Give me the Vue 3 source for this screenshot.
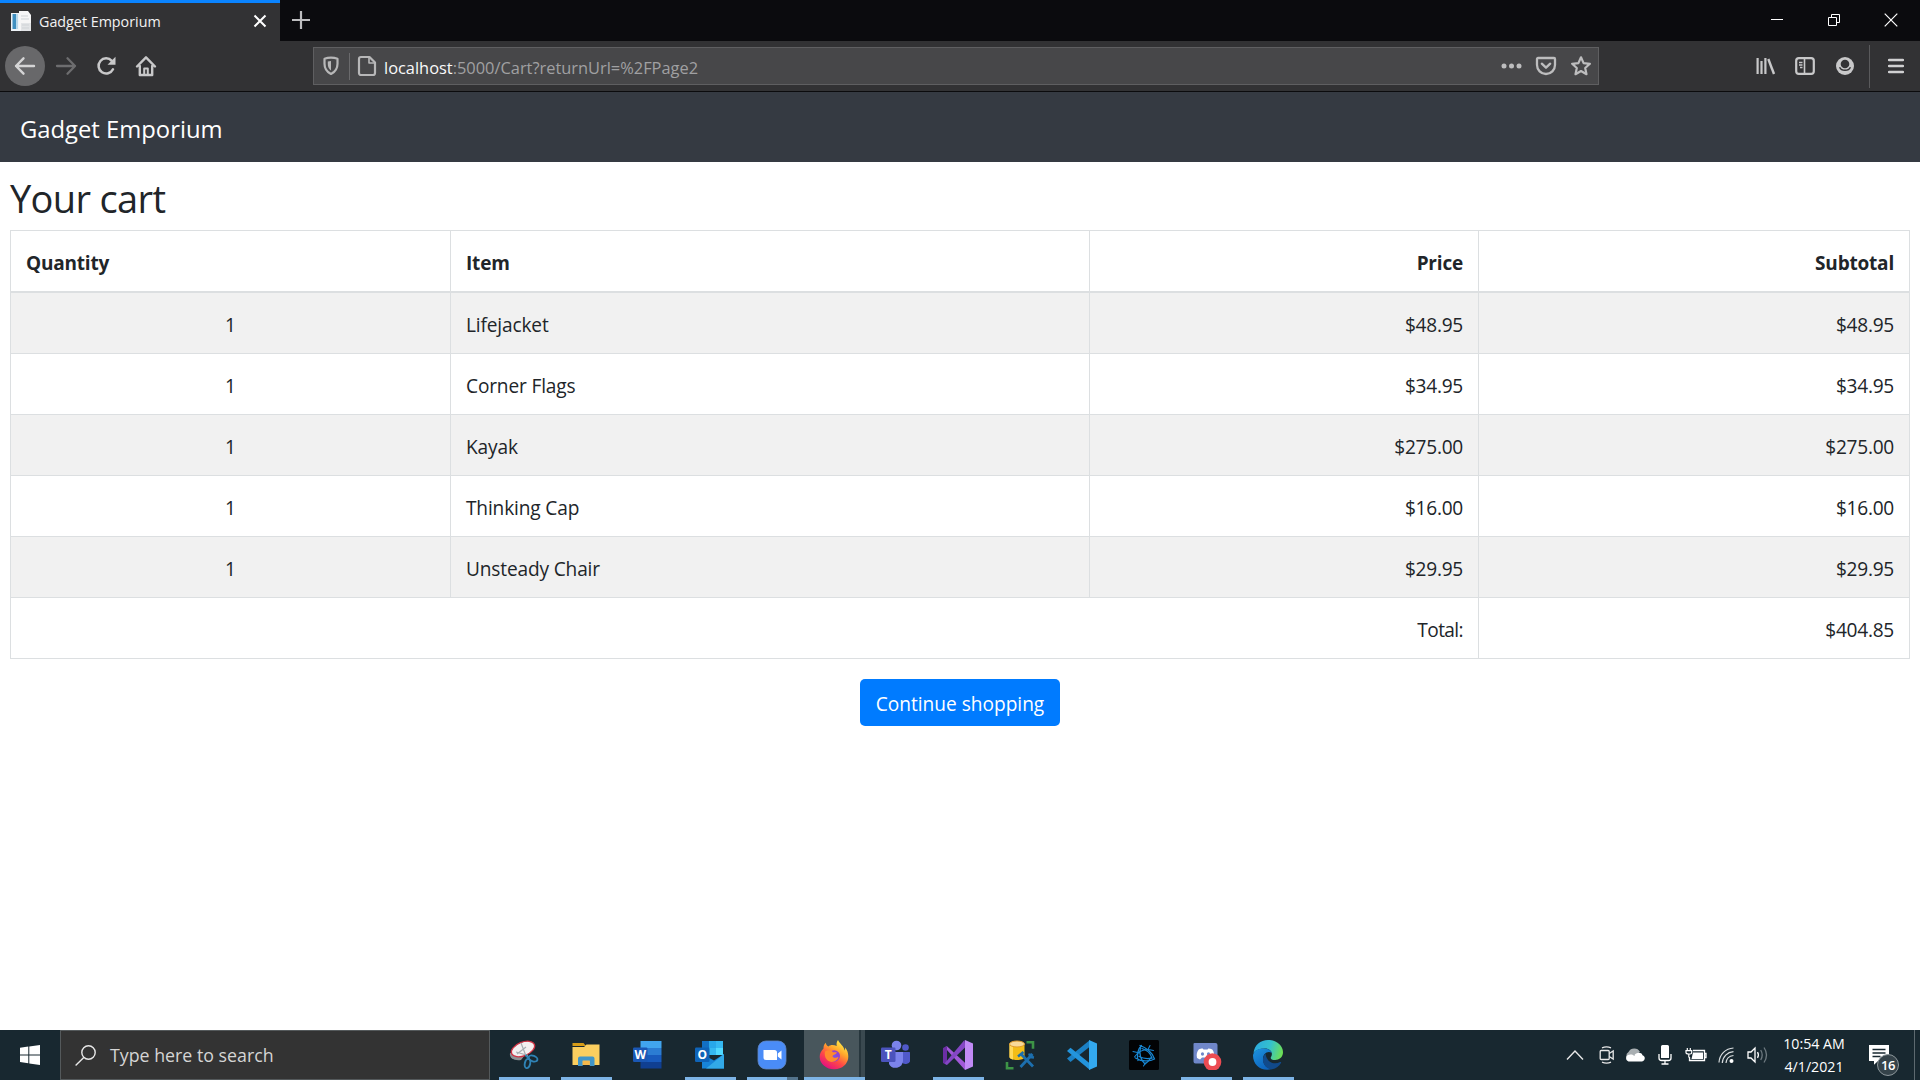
<script setup>
const rows = [
  { quantity: 1, item: 'Lifejacket', price: '$48.95', subtotal: '$48.95' },
  { quantity: 1, item: 'Corner Flags', price: '$34.95', subtotal: '$34.95' },
  { quantity: 1, item: 'Kayak', price: '$275.00', subtotal: '$275.00' },
  { quantity: 1, item: 'Thinking Cap', price: '$16.00', subtotal: '$16.00' },
  { quantity: 1, item: 'Unsteady Chair', price: '$29.95', subtotal: '$29.95' },
]
</script>

<template>
  <div class="screen">
    <header class="tabstrip">
      <div class="tab">
        <svg class="favicon" width="21" height="21" viewBox="0 0 21 21">
          <path d="M0 2h9l2 2v16H0z" fill="#eef3f7" />
          <path d="M1.500 3h3.500v15H1.500z" fill="#3f8fc0" />
          <path d="M5 3h2v15H5z" fill="#b9d8ea" />
          <path d="M8 0h9l3 4v15H8z" fill="#f6f6f6" />
          <path d="M10 12h10v8H10z" fill="#e2e4e6" />
          <path d="M10 5h7M10 8h8M11 14h7M11 17h7" stroke="#cfd3d6" />
        </svg>
        <span class="tab-title">Gadget Emporium</span>
        <svg class="tab-close" width="14" height="14" viewBox="0 0 14 14"><path d="M1.500 1.500l11 11M12.500 1.500l-11 11" stroke="#fff" stroke-width="2" /></svg>
      </div>
      <svg class="newtab" width="18" height="18" viewBox="0 0 18 18"><path d="M9 0v18M0 9h18" stroke="#bdbdbf" stroke-width="2.200" /></svg>
      <div class="winctl">
        <svg width="14" height="14" viewBox="0 0 14 14"><path d="M1 6.500h12" stroke="#fff" /></svg>
        <svg width="14" height="14" viewBox="0 0 14 14" fill="none" stroke="#fff"><path d="M1.500 4.500h8v8h-8zM4.500 4.500v-3h8v8h-3" /></svg>
        <svg width="14" height="14" viewBox="0 0 14 14"><path d="M.7.700l12.600 12.600M13.300.700L.7 13.300" stroke="#fff" stroke-width="1.200" /></svg>
      </div>
    </header>

    <div class="toolbar">
      <div class="nav">
        <span class="back">
          <svg width="22" height="20" viewBox="0 0 22 20" fill="none" stroke="#d4d4d5" stroke-width="2.400" stroke-linecap="round" stroke-linejoin="round"><path d="M20 10H2M9.500 2.300L2 10l7.500 7.700" /></svg>
        </span>
        <svg class="fwd" width="22" height="20" viewBox="0 0 22 20" fill="none" stroke="#6d6d6f" stroke-width="2.300" stroke-linecap="round" stroke-linejoin="round"><path d="M2 10h18M12.500 2.300L20 10l-7.500 7.700" /></svg>
        <svg class="reload" width="20" height="20" viewBox="0 0 20 20">
          <path d="M15.800 4.800A7.600 7.600 0 1 0 17 13.300" fill="none" stroke="#c8c8c9" stroke-width="2.500" stroke-linecap="round" />
          <path d="M19.500.800v8h-8z" fill="#c8c8c9" />
        </svg>
        <svg class="home" width="22" height="22" viewBox="0 0 22 22" fill="none" stroke="#c8c8c9" stroke-width="2.400" stroke-linecap="round" stroke-linejoin="round">
          <path d="M2 11.500L11 2.300l9 9.200M4.800 11v9h12.400v-9" />
          <path d="M9.200 19v-5.500h3.600V19" stroke-width="2" />
        </svg>
      </div>
      <div class="urlbar">
        <svg class="shield" width="18" height="20" viewBox="0 0 18 20">
          <path d="M9 1.700c2.500 0 4.700.4 6.500 1v5c0 4.500-2 8-6.500 10.300C4.500 15.700 2.500 12.200 2.500 7.700v-5C4.300 2.100 6.500 1.700 9 1.700z" fill="none" stroke="#b7b7b8" stroke-width="2.200" stroke-linejoin="round" />
          <path d="M9 5v9.500C6.900 13 5.800 10.700 5.800 8V5.400z" fill="#b7b7b8" />
        </svg>
        <i class="usep"></i>
        <svg class="doc" width="20" height="22" viewBox="0 0 20 22" fill="none" stroke="#b7b7b8" stroke-width="2.200" stroke-linejoin="round">
          <path d="M4 2h8.500L18 7.500V18a2 2 0 0 1-2 2H4a2 2 0 0 1-2-2V4a2 2 0 0 1 2-2z" /><path d="M12 2.500V8h5.500" stroke-width="1.600" />
        </svg>
        <span class="url"><b>localhost</b>:5000/Cart?returnUrl=%2FPage2</span>
        <svg class="dots" width="22" height="6" viewBox="0 0 22 6" fill="#bdbdbe"><circle cx="3" cy="3" r="2.500" /><circle cx="10.500" cy="3" r="2.500" /><circle cx="18" cy="3" r="2.500" /></svg>
        <svg class="pocket" width="22" height="20" viewBox="0 0 22 20" fill="none" stroke="#bdbdbe" stroke-width="2.300" stroke-linecap="round" stroke-linejoin="round">
          <path d="M3 2h16a1 1 0 0 1 1 1v6a9 9 0 0 1-18 0V3a1 1 0 0 1 1-1z" /><path d="M6.800 7.700L11 11.700l4.200-4" />
        </svg>
        <svg class="star" width="22" height="22" viewBox="0 0 22 22"><path d="M11 2.300l2.600 5.800 6.300.700-4.700 4.200 1.300 6.200L11 16l-5.500 3.200L6.800 13 2.100 8.800l6.300-.7z" fill="none" stroke="#bdbdbe" stroke-width="2.200" stroke-linejoin="round" /></svg>
      </div>
      <div class="actions">
        <svg class="lib" width="20" height="18" viewBox="0 0 20 18" fill="none" stroke="#c8c8c9" stroke-width="2.200"><path d="M1.600 1v16M5.500 4v13M9.400 1v16" /><path d="M12.300 2l5.700 15" stroke-width="2.400" /></svg>
        <svg class="side" width="20" height="18" viewBox="0 0 20 18" fill="none" stroke="#c8c8c9"><rect x="1.200" y="1.200" width="17.600" height="15.600" rx="2.600" stroke-width="2.200" /><path d="M9.500 2v14" stroke-width="1.600" /><path d="M4 5.500h3.500M4 8h3.500M5 10.500h2.500" stroke-width="1.300" /></svg>
        <svg class="acct" width="18" height="18" viewBox="0 0 18 18"><circle cx="9" cy="9" r="9" fill="#c8c8c9" /><circle cx="9" cy="7" r="4.300" fill="#323234" /><path d="M3.600 10.200C5.400 14.300 12.600 14.300 14.400 10.200" fill="none" stroke="#323234" stroke-width="1.500" /></svg>
        <i class="asep"></i>
        <svg class="menu" width="16" height="16" viewBox="0 0 16 16"><path d="M1 2h14M1 8h14M1 14h14" stroke="#d0d0d1" stroke-width="2.300" stroke-linecap="round" /></svg>
      </div>
    </div>

    <nav class="navbar"><a class="brand">Gadget Emporium</a></nav>

    <main class="page">
      <h2>Your cart</h2>
      <table>
        <colgroup><col class="c-qty" /><col class="c-item" /><col class="c-price" /><col class="c-sub" /></colgroup>
        <thead>
          <tr><th>Quantity</th><th>Item</th><th class="right">Price</th><th class="right">Subtotal</th></tr>
        </thead>
        <tbody>
          <tr v-for="row in rows" :key="row.item">
            <td class="center">{{ row.quantity }}</td>
            <td>{{ row.item }}</td>
            <td class="right">{{ row.price }}</td>
            <td class="right">{{ row.subtotal }}</td>
          </tr>
        </tbody>
        <tfoot>
          <tr><td colspan="3" class="right total">Total:</td><td class="right">$404.85</td></tr>
        </tfoot>
      </table>
      <div class="buttons"><a class="btn">Continue shopping</a></div>
    </main>

    <footer class="taskbar">
      <div class="start">
        <svg width="20" height="20" viewBox="0 0 20 20" fill="#fff"><path d="M0 2.800l8.300-1.200v7.800H0zM9.300 1.400L20 0v9.400H9.300zM0 10.500h8.300v7.800L0 17.100zM9.300 10.500H20V20L9.300 18.500z" /></svg>
      </div>
      <div class="search">
        <svg width="21" height="21" viewBox="0 0 21 21" fill="none" stroke="#e8e8e8" stroke-width="1.400"><circle cx="13.500" cy="7.500" r="6.700" /><path d="M8.800 12.400L.6 20.500" /></svg>
        <span>Type here to search</span>
      </div>
      <div class="apps">
        <div class="app open">
          <svg width="30" height="30" viewBox="0 0 30 30">
            <path d="M1 13c-1 5 4 8 11 7l4-5z" fill="#8d9295" />
            <ellipse cx="14" cy="9" rx="12.300" ry="6.800" transform="rotate(-22 14 9)" fill="#f4f0f0" stroke="#cf3344" stroke-width="1.300" />
            <path d="M12 3l5 13M7 12l12 3.500M8 14l9-7" stroke="#a8aeb2" stroke-width="1.200" />
            <g fill="none" stroke="#2f83b5" stroke-width="1.900"><ellipse cx="24" cy="18.500" rx="4.600" ry="2.700" transform="rotate(20 24 18.500)" /><ellipse cx="18.500" cy="23.500" rx="2.700" ry="4.700" transform="rotate(12 18.500 23.500)" /><path d="M16.500 15l4 4" /></g>
          </svg>
        </div>
        <div class="app open">
          <svg width="30" height="30" viewBox="0 0 30 30"><path d="M1.500 3h11l2.500 3h-13.500z" fill="#d69c17" /><path d="M1.500 7h11.500l2.500-2.500h13V25h-27z" fill="#fbcf5f" /><path d="M7 26v-7.500a2 2 0 0 1 2-2h12.500a2 2 0 0 1 2 2V26h-4.800v-5.300h-7V26z" fill="#4196c8" /><path d="M11.700 20.700h7V25h-7z" fill="#f5b94b" /></svg>
        </div>
        <div class="app">
          <svg class="office" width="30" height="30" viewBox="0 0 30 30"><path d="M8.500 1h21v7h-21z" fill="#41a5ee" /><path d="M8.500 8h21v7h-21z" fill="#2b7cd3" /><path d="M8.500 15h21v7h-21z" fill="#185abd" /><path d="M8.500 22h21v6.500h-21z" fill="#103f91" /><rect x="1" y="7.500" width="14.500" height="14.500" rx="1.200" fill="#1a57b4" /><text x="8.200" y="18.800" text-anchor="middle" class="glyph">W</text></svg>
        </div>
        <div class="app open">
          <svg class="office" width="30" height="30" viewBox="0 0 30 30"><path d="M8 1h21v14H8z" fill="#1270c4" /><path d="M15 1h7v7h-7z" fill="#28a8ea" /><path d="M22 1h7v7h-7zM15 8h7v7h-7z" fill="#35b8f1" /><path d="M22 8h7v7h-7z" fill="#50d9ff" /><path d="M8 14l12 6.500L30 14v14.500H8z" fill="#1784d8" /><path d="M30 14v14.500H12z" fill="#32a9e7" /><rect x="1" y="7.500" width="14.500" height="14.500" rx="1.200" fill="#0f64b8" /><text x="8.200" y="18.800" text-anchor="middle" class="glyph">O</text></svg>
        </div>
        <div class="app open stacked">
          <svg width="30" height="30" viewBox="0 0 30 30"><rect x="1" y="1" width="28" height="28" rx="8" fill="#4a8cf7" stroke="#5f86c4" stroke-width=".8" /><path d="M6.500 10h11a2.500 2.500 0 0 1 2.500 2.500V20H9a2.500 2.500 0 0 1-2.500-2.500zM20.800 13.500l3.700-3v9l-3.700-3z" fill="#fff" /></svg>
        </div>
        <div class="app open active">
          <svg width="30" height="30" viewBox="0 0 30 30">
            <defs>
              <linearGradient id="ff" x1=".8" y1=".05" x2=".25" y2=".95"><stop offset="0" stop-color="#fff04a" /><stop offset=".35" stop-color="#ffa52b" /><stop offset=".65" stop-color="#ff4a45" /><stop offset="1" stop-color="#e3117f" /></linearGradient>
              <radialGradient id="ffp"><stop offset="0" stop-color="#7a55e8" /><stop offset="1" stop-color="#9a3bc9" /></radialGradient>
            </defs>
            <path d="M19 0c-1.500 2-1.700 4-1.200 6C14 4.500 11 5 9.500 6.500 7.500 6 7 4 6.800 2.800 4.500 5 4.500 7 4.500 8.500 2 11 .7 13.500.7 17A14.200 12.500 0 0 0 29.300 16.500c0-4-1.300-7-3.300-9 .2 1.500 0 2.300-.3 3C24.500 5.500 21 4 19 0z" fill="url(#ff)" />
            <circle cx="15.200" cy="16" r="5.800" fill="url(#ffp)" />
            <path d="M6 11.500c3-2 6-1.500 8 .7h4c-1 2.500-4 2.300-4.500 4 .8 2 4 2 6 .6-1 5-8 7-11.500 3C5.500 17 5.500 14 6 11.500z" fill="#ff8a2e" />
          </svg>
        </div>
        <div class="app">
          <svg class="office" width="30" height="30" viewBox="0 0 30 30"><circle cx="16.500" cy="5.500" r="4.800" fill="#7b83eb" /><circle cx="25.500" cy="7.500" r="3.300" fill="#5059c9" /><path d="M21 12h8a1.500 1.500 0 0 1 1.500 1.500V19a5 5 0 0 1-9 3z" fill="#5059c9" /><path d="M9 12h14v9a7.500 7.500 0 0 1-14 3z" fill="#7b83eb" /><rect x="1" y="7.500" width="14.500" height="14.500" rx="1.200" fill="#4b53bc" /><text x="8.200" y="18.800" text-anchor="middle" class="glyph">T</text></svg>
        </div>
        <div class="app open">
          <svg width="30" height="30" viewBox="0 0 30 30"><path d="M1.500 7.200L4 6.200l18.500 17-.5 6.800z" fill="#a159d8" /><path d="M0 8l4-2v19l-4-2z" fill="#6b2fa5" /><path d="M4 25l-2.500-1.500L21.500 0l1 7z" fill="#8446c4" /><path d="M22 0l8 3.500v23L22 30z" fill="#c18af5" /></svg>
        </div>
        <div class="app">
          <svg width="30" height="30" viewBox="0 0 30 30"><path d="M4.500 4v13c0 1.800 3.400 3 7.500 3s7.500-1.200 7.500-3V4z" fill="#f3bd18" /><path d="M4.500 4v13c0 1 1.500 2 3.500 2.500V5z" fill="#ffd95c" /><ellipse cx="12" cy="4" rx="7.500" ry="3" fill="#f8d99a" stroke="#e09b2c" /><path d="M21.500 2.200h6.500v6.500M2 22v6.300h6.500" fill="none" stroke="#3d9446" stroke-width="2.600" /><path d="M15.500 13.500l12.500 13M27.500 14L15.500 27" stroke="#1c6fae" stroke-width="2.800" /><path d="M13 16.500l5.500-4.500M24.300 13.500l1 3.500 3.700.500" fill="none" stroke="#1c6fae" stroke-width="2.500" /></svg>
        </div>
        <div class="app">
          <svg width="30" height="30" viewBox="0 0 30 30"><path d="M0 18.500l3.500 3.500L23 6.500V0z" fill="#1b80c4" /><path d="M0 11l3.500-3.300L23 23.500V30z" fill="#2394dc" /><path d="M22 0l8 3.500v23L22 30z" fill="#33a9ef" /></svg>
        </div>
        <div class="app">
          <svg width="30" height="30" viewBox="0 0 30 30"><rect width="30" height="30" rx="1.500" fill="#020305" /><g fill="none" stroke="#1886d2" stroke-width="1.300" stroke-linecap="round"><path d="M11 5.500c6 2 12.500 7 14.500 13.500-5 3-14 2.500-19-1M9 20.500c-1.500-5 0-12 3.500-15" /><path d="M13 8.500c5 1.500 8.500 5 10 9.500-4 1-9 .5-13-1.500M11.500 7.500c-1.500 6 0 12 4.500 16.500 3-2 5-4 6.500-7" /><path d="M5.500 17c3-5 8-7.500 14-7.500M4 11.500l6.500 1.500M24.500 10.500l-5-1M14.500 26l2-3M21 5.500l-2 4" stroke-width="1.100" /></g></svg>
        </div>
        <div class="app open">
          <svg class="chat" width="30" height="30" viewBox="0 0 30 30"><path d="M2.500 3h21a2 2 0 0 1 2 2v21l-4-2.500H3.500a2 2 0 0 1-2-2V4a1 1 0 0 1 1-1z" fill="#6f87c9" /><path d="M5 18c-.8-4 0-6 1.700-8.500 1.500-.8 2.500-1 4-1l.8 1h4l.8-1c1.500 0 2.700.3 4 1C22 12 22.500 14 22 18l-3 1.500-2-2h-7l-2 2z" fill="#fff" /><ellipse cx="10.500" cy="14" rx="1.600" ry="1.800" fill="#6f87c9" /><ellipse cx="16.500" cy="14" rx="1.600" ry="1.800" fill="#6f87c9" /><circle cx="20.500" cy="22" r="8.800" fill="#ec4b52" /><circle cx="20.500" cy="22" r="3.900" fill="#fff" /></svg>
        </div>
        <div class="app open">
          <svg width="30" height="30" viewBox="0 0 30 30">
            <defs>
              <linearGradient id="eg1" x1="0" y1=".3" x2="1" y2=".5"><stop offset="0" stop-color="#2aa9e0" /><stop offset=".55" stop-color="#35c1cc" /><stop offset="1" stop-color="#6ddf55" /></linearGradient>
              <linearGradient id="eg2" x1="0" y1="0" x2=".6" y2="1"><stop offset="0" stop-color="#1e95e0" /><stop offset="1" stop-color="#0d63bd" /></linearGradient>
            </defs>
            <path d="M.5 13C1.500 5 7.500 0 15 0c9 0 15 6 15 12.300 0 5-4 7.700-7.800 7.700-3.700 0-5.200-1.500-4.200-3 2.500-4-.5-8.500-6-8.500C6.500 8.500 2.500 10 .5 13z" fill="url(#eg1)" />
            <path d="M0 15.500C.5 11 5 8.500 10.500 8.500c4.500 0 7 1.500 8.300 4.200C14 10.500 10 14 10 19c0 5.500 4 9.500 9 10C9 32 0 25.500 0 15.500z" fill="url(#eg2)" />
            <path d="M12.500 13.500C10 16 9.300 20 10.500 23c1.500 4 5 6.300 8.700 6.200 4-.8 7-3.200 8.800-6.300.5-.8-.2-1.200-.9-.8-6 3-13.500.4-14.600-8.600z" fill="#114a8b" />
          </svg>
        </div>
      </div>
      <div class="tray">
        <svg width="18" height="12" viewBox="0 0 18 12"><path d="M1 10.500l8-8.500 8 8.500" fill="none" stroke="#e8e8e8" stroke-width="1.400" /></svg>
        <svg class="cam" width="16" height="18" viewBox="0 0 16 18" fill="none" stroke="#e8e8e8" stroke-width="1.300"><rect x="1.200" y="4.500" width="9" height="9" rx="1" /><path d="M10.200 7.500l4-2.500v8l-4-2.500M3 1.800q4.500-2 9 0M3 16.200q4.500 2 9 0" /></svg>
        <svg class="cloud" width="22" height="14" viewBox="0 0 22 14"><path d="M5 12A4.500 4.500 0 0 1 4.500 4 6.500 6.500 0 0 1 16 4L8 9z" fill="#a9afb2" /><path d="M4.500 13.500a3.500 3.500 0 0 1 .7-6.800c2.500-.4 3.300 0 5 1C12 4 17.500 4 18.500 7.300c3 .7 3.300 5.500-.5 6.200z" fill="#fff" /></svg>
        <svg class="mic" width="14" height="20" viewBox="0 0 14 20"><path d="M4.500 0h5a1.500 1.500 0 0 1 1.500 1.500V13H3V1.500A1.500 1.500 0 0 1 4.500 0z" fill="#fff" /><path d="M1 9v4q0 2.500 2.500 2.500h7Q13 15.500 13 13V9M7 15.500V19M3.500 19h7" fill="none" stroke="#fff" stroke-width="1.300" /></svg>
        <svg class="bat" width="22" height="16" viewBox="0 0 22 16"><path d="M8 3.500h11.500v10H4.500V10M19.500 6.500h1.500v4h-1.500" fill="none" stroke="#fff" stroke-width="1.300" /><path d="M8 5.500h10v6.500H6.500z" fill="#fff" /><path d="M2.300 1v2.500M5.300 1v2.500M1 3.700h5.700v1.800q0 1.500-1.500 1.500h-1.500Q1 7 1 5.500zM3.800 7v3.500" fill="none" stroke="#fff" stroke-width="1.200" /></svg>
        <svg class="wifi" width="17" height="17" viewBox="0 0 17 17" fill="none"><g stroke="#d9dddf" stroke-width="1.200"><path d="M1 15.500C1.500 7.500 7.500 1.500 15.500 1M4.300 16C4.700 9.500 9.300 5.200 15.500 4.700M8 16C8.300 12 11.300 9 15.500 8.500" /></g><circle cx="13.500" cy="14" r="2" fill="#fff" /></svg>
        <svg class="vol" width="21" height="18" viewBox="0 0 21 18" fill="none" stroke-width="1.300"><path d="M1 6h3l4-4v14l-4-4H1z" stroke="#fff" /><path d="M10.500 6.200q1.800 2.800 0 5.600" stroke="#fff" /><path d="M13.700 4q3 5 0 10M17 1.500q5 7.500 0 15" stroke="#6e7a80" /></svg>
        <div class="clock"><span>10:54 AM</span><span>4/1/2021</span></div>
        <div class="notif">
          <svg width="20" height="20" viewBox="0 0 20 20"><path d="M0 0h20v16H9l-4 3.700V16H0z" fill="#fff" /><path d="M3.500 4.500h13M3.500 8h13M3.500 11.500h8" stroke="#182830" stroke-width="1.400" /></svg>
          <span class="badge">16</span>
        </div>
        <i class="peek"></i>
      </div>
    </footer>
  </div>
</template>

<style>
html, body { margin: 0; overflow: hidden; }
</style>

<style scoped>
* { box-sizing: border-box; }
svg { display: block; flex: none; }
.screen { width: 1920px; height: 1080px; display: flex; flex-direction: column; overflow: hidden; background: #fff; color: #212529; font: 19.1px/30px "Open Sans", "Noto Sans", sans-serif; }

.tabstrip { height: 41px; flex: none; display: flex; align-items: flex-start; background: #0b0b0e; }
.tab { width: 280px; height: 41px; display: flex; align-items: center; padding: 0 13px 0 11px; background: #323234; border-top: 3px solid #0a84ff; }
.favicon { margin-top: -2px; }
.tab-title { flex: 1; margin-left: 7px; color: #f2f2f3; font-size: 14.3px; line-height: 20px; }
.tab-close { margin-top: -2px; }
.newtab { margin: 11px 0 0 12px; }
.winctl { display: flex; gap: 43px; margin: 13px 22px 0 auto; }

.toolbar { height: 51px; flex: none; display: flex; align-items: center; background: #323234; border-bottom: 1px solid #0b0b0d; }
.nav { width: 313px; display: flex; align-items: center; padding-left: 5px; }
.back { width: 40px; height: 40px; display: flex; align-items: center; justify-content: center; border-radius: 50%; background: #68686a; }
.fwd { margin-left: 10px; }
.reload { margin-left: 19px; }
.home { margin-left: 19px; }
.urlbar { width: 1286px; height: 38px; display: flex; align-items: center; padding: 0 6px 0 8px; background: #474749; border: 1px solid #5f5f61; }
.usep { width: 1px; height: 27px; margin-left: 9px; background: #6a6a6c; }
.doc { margin-left: 7px; }
.url { flex: 1; margin: 4px 0 0 7px; color: #a0a0a2; font-size: 16.4px; line-height: 24px; white-space: nowrap; }
.url b { color: #f9f9fa; font-weight: 400; }
.pocket { margin-left: 12px; }
.star { margin-left: 13px; }
.actions { flex: 1; display: flex; align-items: center; padding-left: 157px; }
.side { margin-left: 19px; }
.acct { margin-left: 21px; }
.asep { width: 1px; height: 43px; margin-left: 15px; background: #5a5a5c; }
.menu { margin-left: 18px; }

.navbar { height: 70px; flex: none; display: flex; align-items: center; padding: 3px 20px 0; background: #353a42; }
.brand { color: #fff; font-size: 23.8px; }

.page { flex: 1; display: flex; flex-direction: column; padding: 10px 10px 0; }
h2 { margin: 0; height: 58px; padding-top: 2px; font-size: 38px; font-weight: 400; line-height: 48px; letter-spacing: -.65px; }
table { width: 1900px; table-layout: fixed; border-collapse: separate; border-spacing: 0; border: 0 solid #dcdfe1; border-width: 0 1px 1px 0; }
.c-qty { width: 440px; }
.c-item { width: 639px; }
.c-price { width: 389px; }
.c-sub { width: 431px; }
th, td { height: 61px; padding: 17px 15px 13px; border: 0 solid #dcdfe1; border-width: 1px 0 0 1px; text-align: left; letter-spacing: -.15px; }
th { font-weight: 700; font-size: 19px; letter-spacing: -.2px; }
tbody tr:first-child td { height: 62px; border-top-width: 2px; }
tbody tr:nth-child(odd) { background: #f1f1f1; }
th.right, td.right { text-align: right; }
td.right { letter-spacing: -.25px; }
td.total { letter-spacing: -.6px; }
td.center { text-align: center; }
.buttons { display: flex; justify-content: center; margin-top: 20px; }
.btn { width: 200px; height: 47px; padding-top: 10px; border-radius: 5px; background: #007bff; color: #fff; text-align: center; }

.taskbar { height: 50px; flex: none; display: flex; background: #182830; }
.start { width: 60px; display: flex; align-items: center; justify-content: center; }
.search { width: 430px; display: flex; align-items: center; padding-left: 14px; background: #333; border: 1px solid #54595b; color: #d5d5d5; font-size: 17.8px; }
.search span { margin: -1px 0 0 14px; }
.apps { display: flex; margin-left: 3px; }
.app { width: 62px; height: 50px; display: flex; justify-content: center; padding-top: 10px; }
.office { margin-left: -2px; }
.chat { margin-left: 1px; }
.open { background: linear-gradient(#7db4e6, #7db4e6) 6px 47px / 51px 3px no-repeat; }
.stacked { background: linear-gradient(90deg, #7db4e6 40px, #53738b 40px) 6px 47px / 51px 3px no-repeat; }
.active { background: linear-gradient(#7db4e6, #7db4e6) 1px 47px / 61px 3px no-repeat, linear-gradient(90deg, transparent 1px, #48565c 1px, #48565c 56px, #27363d 56px, #27363d 58px, #3a4950 58px); }
.glyph { fill: #fff; font: 700 12px "Open Sans", sans-serif; }

.tray { display: flex; align-items: center; margin-left: auto; }
.cam { margin-left: 15px; }
.cloud { margin-left: 9px; }
.mic { margin-left: 12px; }
.bat { margin-left: 13px; }
.wifi { margin-left: 11px; }
.vol { margin-left: 12px; }
.clock { width: 92px; height: 50px; display: flex; flex-direction: column; align-items: center; padding-top: 2px; color: #fff; font-size: 14.2px; line-height: 23px; }
.notif { position: relative; width: 54px; height: 50px; padding: 15px 0 0 9px; }
.badge { position: absolute; left: 17px; top: 24px; width: 22px; height: 22px; border-radius: 50%; background: #35434a; border: 1px solid #8d979b; color: #fff; font-size: 13px; font-weight: 600; line-height: 20px; text-align: center; letter-spacing: -.5px; }
.peek { width: 1px; height: 50px; margin-right: 5px; background: #5d696f; }
</style>
